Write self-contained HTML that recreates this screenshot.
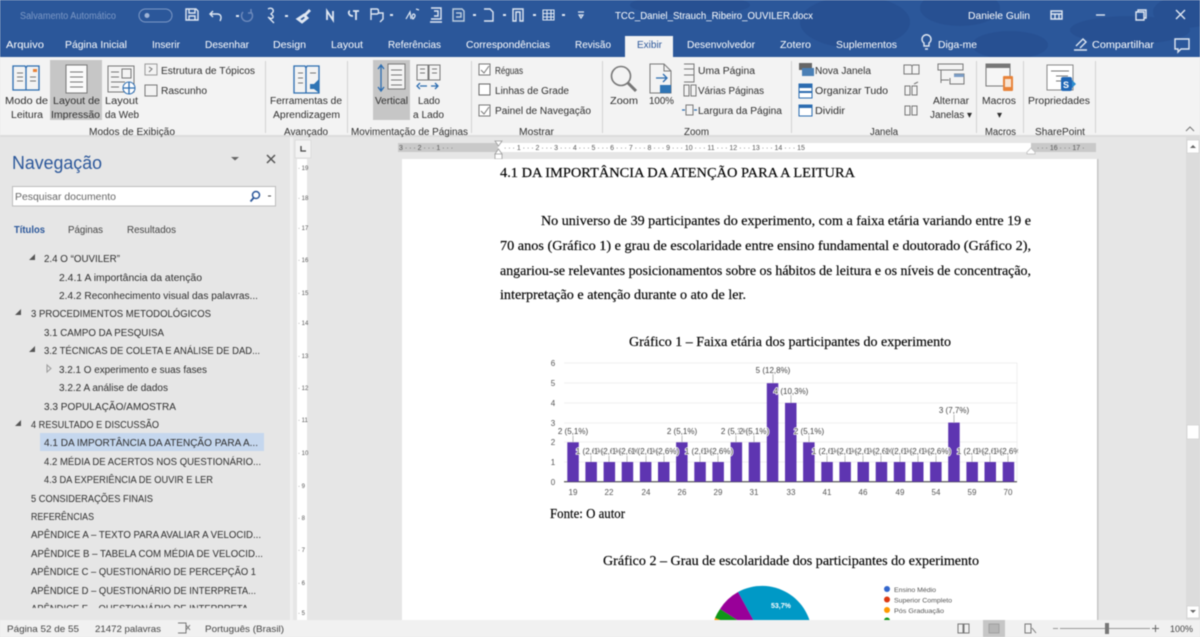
<!DOCTYPE html>
<html lang="pt-BR"><head><meta charset="utf-8"><title>TCC_Daniel_Strauch_Ribeiro_OUVILER.docx</title>
<style>
html,body{margin:0;padding:0;background:#e6e6e6;width:1200px;height:637px;overflow:hidden}
svg{display:block;filter:blur(.6px)}
text{font-family:"Liberation Sans",sans-serif;white-space:pre}
.w text{fill:#fff;font-size:10.5px}
.r text{fill:#2e2e2e;font-size:10px}
.n text{fill:#2e2e2e;font-size:10px}
.d text{font-family:"Liberation Serif",serif;fill:#000;font-size:14px;stroke:#000;stroke-width:.15px}
.c text{fill:#444;font-size:8px;paint-order:stroke;stroke:#fff;stroke-width:1.6px}
.a text{fill:#555;font-size:8px}
.i{fill:none;stroke:#777;stroke-width:1}
.b{fill:none;stroke:#2b6cb0;stroke-width:1.3}
.q{fill:none;stroke:#dfe7f2;stroke-width:1.4}
</style></head><body>
<svg width="1200" height="637" viewBox="0 0 1200 637" xmlns="http://www.w3.org/2000/svg">
<rect width="1200" height="637" fill="#e6e6e6"/>

<!-- title bar -->
<rect width="1200" height="57" fill="#2b579a"/>
<g fill="#275092">
<ellipse cx="855" cy="22" rx="55" ry="26"/><ellipse cx="960" cy="8" rx="40" ry="18"/><ellipse cx="1010" cy="45" rx="38" ry="14"/><ellipse cx="1130" cy="30" rx="60" ry="14"/><ellipse cx="1185" cy="12" rx="32" ry="16"/><ellipse cx="690" cy="5" rx="60" ry="10"/>
</g>
<text x="20" y="19" font-size="10" fill="#7d99c6" textLength="96" lengthAdjust="spacingAndGlyphs">Salvamento Automático</text>
<rect x="139" y="9" width="33" height="13" rx="6.5" fill="none" stroke="#7d99c6"/>
<circle cx="147" cy="15.500" r="2.500" fill="#9fb4d6"/>

<!-- QAT icons -->
<g class="q">
<path d="M186 9h10l2 2v9h-12zM189 9v4h6V9M189 20v-4h6v4"/>
<path d="M213 11l-3 3 3 3M210 14h7c4 0 5 3 3 7"/>
<path stroke="#6d8abc" d="M243 12a5.500 5.500 0 1 0 8 0M251 9v4h-3"/>
<path d="M268 9c3-2 6 0 5 3l-2 2 2 2c1 3-3 3-5 1M269 18l5 5"/>
<path stroke-width="2.800" d="M298 19l6-4 3 3-5 4zM305 15l5-5"/>
<path stroke-width="1.800" d="M327 20v-9l6 9v-9"/>
<path stroke-width="1.800" d="M356 20v-9M353 11h6M350 11c-2 0-2 5 3 5"/>
<path d="M371 20v-11h6c2 0 2 5 0 5h-6M378 13h5v6l-3 3"/>
<path stroke-width="1.200" d="M406 19l4-7 1 7M412 19c3-1 4-4 2-5-2 0-3 4 0 5M416 9l3 1"/>
<path d="M431 8h10v11h-10M434 11h4v5h-4M430 22h12"/>
<path stroke="#bcd" d="M453 9h9l2 2v10h-11zM456 13h5v4h-5"/>
<path d="M484 9h6l3 3v9h-9M484 21h9"/>
<path d="M513 9h10v12h-3v-9h-4v9h-3z"/>
<path stroke-width="1.100" d="M543 10h11v10h-11zM543 13.500h11M543 17h11M547 10v10M551 10v10"/>
<path stroke-width="1.200" d="M578 12h6M579 15h4l-2 3z"/>
</g>
<g fill="#dfe7f2">
<rect x="236" y="15" width="3" height="2"/><rect x="285" y="15" width="3" height="2"/><rect x="390" y="14" width="3" height="2"/><rect x="473" y="14" width="3" height="2"/><rect x="503" y="14" width="3" height="2"/><rect x="533" y="14" width="3" height="2"/><rect x="562" y="14" width="3" height="2"/>
</g>
<g class="w">
<text x="615" y="19" font-size="10" textLength="198" lengthAdjust="spacingAndGlyphs">TCC_Daniel_Strauch_Ribeiro_OUVILER.docx</text>
<text x="968" y="19" textLength="62" lengthAdjust="spacingAndGlyphs">Daniele Gulin</text>
<text x="6" y="48" fill="#dde6f2" textLength="38" lengthAdjust="spacingAndGlyphs">Arquivo</text>
<text x="65" y="48" textLength="62" lengthAdjust="spacingAndGlyphs">Página Inicial</text>
<text x="152" y="48" textLength="28" lengthAdjust="spacingAndGlyphs">Inserir</text>
<text x="205" y="48" textLength="44" lengthAdjust="spacingAndGlyphs">Desenhar</text>
<text x="273" y="48" textLength="33" lengthAdjust="spacingAndGlyphs">Design</text>
<text x="331" y="48" textLength="32" lengthAdjust="spacingAndGlyphs">Layout</text>
<text x="388" y="48" textLength="53" lengthAdjust="spacingAndGlyphs">Referências</text>
<text x="466" y="48" textLength="84" lengthAdjust="spacingAndGlyphs">Correspondências</text>
<text x="575" y="48" textLength="36" lengthAdjust="spacingAndGlyphs">Revisão</text>
<text x="687" y="48" textLength="68" lengthAdjust="spacingAndGlyphs">Desenvolvedor</text>
<text x="780" y="48" textLength="31" lengthAdjust="spacingAndGlyphs">Zotero</text>
<text x="836" y="48" textLength="61" lengthAdjust="spacingAndGlyphs">Suplementos</text>
<text x="938" y="48" textLength="39" lengthAdjust="spacingAndGlyphs">Diga-me</text>
<text x="1092" y="48" textLength="62" lengthAdjust="spacingAndGlyphs">Compartilhar</text>
</g>
<g class="q">
<path d="M1051 11h11v8h-11zM1051 14h11M1055 14v5M1059 14v5"/>
<path d="M1096 15h9"/>
<path d="M1136 12h8v8h-8zM1138 12v-2h8v8h-2"/>
<path d="M1176 10l9 9M1185 10l-9 9"/>
<path d="M924 43a4.500 4.500 0 1 1 5 0v3h-5zM925 49h3"/>
<path d="M1074 50h13M1076 46l7-7 3 3-6 6"/>
<path d="M1175 39h14v10h-8l-3 3v-3h-3z"/>
</g>
<!-- active tab -->
<path d="M625 57V36h48v21z" fill="#f3f3f3"/>
<text x="637" y="48" font-size="10.500" fill="#2b579a" textLength="25" lengthAdjust="spacingAndGlyphs">Exibir</text>

<!-- ribbon -->
<rect y="57" width="1200" height="78" fill="#f3f3f3"/>
<rect y="135" width="1200" height="2" fill="#dcdcdc"/>
<rect x="50" y="60" width="52" height="60" fill="#c6c6c6"/>
<rect x="373" y="60" width="37" height="60" fill="#c6c6c6"/>
<g fill="#d2d2d2">
<rect x="265" y="61" width="1" height="72"/><rect x="347" y="61" width="1" height="72"/><rect x="471" y="61" width="1" height="72"/><rect x="602" y="61" width="1" height="72"/><rect x="791" y="61" width="1" height="72"/><rect x="976" y="61" width="1" height="72"/><rect x="1023" y="61" width="1" height="72"/><rect x="1095" y="61" width="1" height="72"/>
</g>
<!-- ribbon icons -->
<path class="b" stroke-width="1.600" d="M13 66h12l1 2 1-2h12v24H13zM26 68v22"/>
<path class="i" d="M17 73h6M17 77h6M17 81h6M30 77h6M30 81h6"/>
<rect x="33" y="69" width="4" height="3" fill="#e8833a"/>
<rect x="66" y="65" width="21" height="28" fill="#fafafa" stroke="#777"/>
<path class="i" d="M70 72h13M70 77h13M70 82h13M70 87h13"/>
<path class="i" stroke="#999" d="M108 66h26v26h-26zM122 69h9v9h-9zM111 72h8M111 77h8M111 82h14M111 87h8"/>
<circle cx="129" cy="88" r="6" fill="#fff" stroke="#2b6cb0"/><path class="b" d="M123 88h12M129 82v12"/>
<rect x="145" y="64" width="12" height="11" fill="none" stroke="#999"/><path class="i" stroke="#999" d="M149 67l3 2-3 3"/>
<rect x="145" y="85" width="12" height="11" fill="none" stroke="#777"/>
<path class="b" stroke-width="1.600" d="M294 66h11l1 2 1-2h12v27h-25zM306 68v25"/>
<path class="i" d="M298 73h5M298 78h5M298 83h5M310 73h6"/>
<path d="M310 84h4l5-5v14l-5-4h-4z" fill="#2f75b5"/>
<rect x="388" y="64" width="17" height="25" fill="#f3f3f3" stroke="#777"/>
<path class="i" d="M391 70h11M391 75h11M391 80h11M391 85h11"/>
<path class="b" stroke="#2f75b5" stroke-width="1.800" d="M381 65v26M378 69l3-4 3 4M378 87l3 4 3-4"/>
<path class="i" d="M417 65h11v15h-11zM429 65h11v15h-11zM420 69h5M420 73h5M432 69h5M432 73h5"/>
<path class="b" stroke-width="1.700" d="M420 86h7M420 83l-3 3 3 3M431 86h7M435 83l3 3-3 3"/>
<rect x="479" y="64" width="11" height="11" fill="#fff" stroke="#777"/><path class="i" d="M481 70l3 3 5-7"/>
<rect x="479" y="84" width="11" height="11" fill="#fff" stroke="#666"/>
<rect x="479" y="105" width="11" height="11" fill="#fff" stroke="#777"/><path class="i" d="M481 111l3 3 5-7"/>
<circle cx="621" cy="76" r="9.500" fill="none" stroke="#777" stroke-width="1.600"/><path fill="none" stroke="#777" stroke-width="3" d="M628 83l8 8"/>
<path class="i" stroke="#aaa" d="M650 64h14l7 7v22h-21zM664 64v7h7"/>
<path class="b" stroke-width="1.700" d="M655 87h0M656 78h11M663 74l4 4-4 4"/>
<rect x="660" y="85" width="11" height="8" fill="#2f75b5"/>
<path class="i" d="M684 63h10v18h-10M684 68h10M684 74h10" transform="translate(0 1)"/>
<path class="i" stroke="#999" d="M684 85h5v11h-5zM691 85h5v11h-5z"/>
<path class="i" stroke="#999" d="M686 105h7v10h-7z"/><path class="b" d="M682 110h3M694 110h3"/>
<rect x="799" y="63" width="13" height="7" fill="#666"/><rect x="802" y="68" width="12" height="8" fill="#4a7fb5"/>
<rect x="799" y="84" width="13" height="14" fill="#fff" stroke="#2b6cb0"/><rect x="799" y="84" width="13" height="4" fill="#2b6cb0"/><rect x="799" y="91" width="13" height="2" fill="#2b6cb0"/>
<rect x="799" y="105" width="13" height="11" fill="#fff" stroke="#2b6cb0"/><rect x="799" y="105" width="13" height="3" fill="#2b6cb0"/>
<path class="i" d="M904 65h7l1 1 1-1h6v9h-15zM912 66v8"/>
<path class="i" stroke="#bbb" d="M905 86h5v9h-5zM912 86h5v9h-5zM914 84l4-2"/>
<path class="i" stroke="#bbb" d="M905 106h5v9h-5zM912 106h5v9h-5z"/>
<path class="i" d="M938 64h25v6h-25zM938 70h3v13M954 74h10v10h-14v-6M941 80h8"/>
<rect x="954" y="74" width="10" height="3" fill="#7a9cc6"/>
<rect x="986" y="64" width="24" height="22" fill="#f6f6f6" stroke="#777"/><rect x="986" y="64" width="24" height="4" fill="#777"/>
<rect x="1003" y="76" width="10" height="15" rx="1" fill="#e8833a"/><rect x="1005" y="79" width="6" height="8" fill="#f8e4d2"/>
<rect x="1047" y="65" width="26" height="25" fill="#fff" stroke="#888"/><path class="i" stroke="#999" d="M1051 71h18M1056 76h12M1056 81h8"/>
<rect x="1061" y="77" width="11" height="14" rx="2" fill="#1f66b5"/><path d="M1072 80l4 4-4 4z" fill="#2d8ed0"/><text x="1063" y="88" font-size="9" font-weight="bold" fill="#fff">S</text>
<path class="i" stroke-width="1.500" d="M1186 131l4-4 4 4"/>

<g class="r">
<text x="5" y="104" textLength="43" lengthAdjust="spacingAndGlyphs">Modo de</text>
<text x="11" y="118" textLength="32" lengthAdjust="spacingAndGlyphs">Leitura</text>
<text x="53" y="104" textLength="47" lengthAdjust="spacingAndGlyphs">Layout de</text>
<text x="51" y="118" textLength="49" lengthAdjust="spacingAndGlyphs">Impressão</text>
<text x="105" y="104" textLength="33" lengthAdjust="spacingAndGlyphs">Layout</text>
<text x="105" y="118" textLength="34" lengthAdjust="spacingAndGlyphs">da Web</text>
<text x="161" y="74" textLength="94" lengthAdjust="spacingAndGlyphs">Estrutura de Tópicos</text>
<text x="161" y="94" textLength="46" lengthAdjust="spacingAndGlyphs">Rascunho</text>
<text x="89" y="135" textLength="86" lengthAdjust="spacingAndGlyphs">Modos de Exibição</text>
<text x="270" y="104" textLength="72" lengthAdjust="spacingAndGlyphs">Ferramentas de</text>
<text x="273" y="118" textLength="67" lengthAdjust="spacingAndGlyphs">Aprendizagem</text>
<text x="284" y="135" textLength="44" lengthAdjust="spacingAndGlyphs">Avançado</text>
<text x="375" y="104" textLength="33" lengthAdjust="spacingAndGlyphs">Vertical</text>
<text x="418" y="104" textLength="22" lengthAdjust="spacingAndGlyphs">Lado</text>
<text x="413" y="118" textLength="31" lengthAdjust="spacingAndGlyphs">a Lado</text>
<text x="351" y="135" textLength="117" lengthAdjust="spacingAndGlyphs">Movimentação de Páginas</text>
<text x="495" y="74" textLength="28" lengthAdjust="spacingAndGlyphs">Réguas</text>
<text x="495" y="94" textLength="74" lengthAdjust="spacingAndGlyphs">Linhas de Grade</text>
<text x="495" y="114" textLength="96" lengthAdjust="spacingAndGlyphs">Painel de Navegação</text>
<text x="519" y="135" textLength="35" lengthAdjust="spacingAndGlyphs">Mostrar</text>
<text x="610" y="104" textLength="28" lengthAdjust="spacingAndGlyphs">Zoom</text>
<text x="649" y="104" textLength="25" lengthAdjust="spacingAndGlyphs">100%</text>
<text x="698" y="74" textLength="57" lengthAdjust="spacingAndGlyphs">Uma Página</text>
<text x="698" y="94" textLength="66" lengthAdjust="spacingAndGlyphs">Várias Páginas</text>
<text x="698" y="114" textLength="84" lengthAdjust="spacingAndGlyphs">Largura da Página</text>
<text x="684" y="135" textLength="25" lengthAdjust="spacingAndGlyphs">Zoom</text>
<text x="815" y="74" textLength="56" lengthAdjust="spacingAndGlyphs">Nova Janela</text>
<text x="815" y="94" textLength="73" lengthAdjust="spacingAndGlyphs">Organizar Tudo</text>
<text x="815" y="114" textLength="30" lengthAdjust="spacingAndGlyphs">Dividir</text>
<text x="870" y="135" textLength="28" lengthAdjust="spacingAndGlyphs">Janela</text>
<text x="933" y="104" textLength="36" lengthAdjust="spacingAndGlyphs">Alternar</text>
<text x="930" y="118" textLength="42" lengthAdjust="spacingAndGlyphs">Janelas ▾</text>
<text x="982" y="104" textLength="34" lengthAdjust="spacingAndGlyphs">Macros</text>
<text x="997" y="118" font-size="8">▾</text>
<text x="985" y="135" textLength="31" lengthAdjust="spacingAndGlyphs">Macros</text>
<text x="1028" y="104" textLength="62" lengthAdjust="spacingAndGlyphs">Propriedades</text>
<text x="1035" y="135" textLength="50" lengthAdjust="spacingAndGlyphs">SharePoint</text>
</g>

<!-- document area -->
<rect x="290" y="137" width="910" height="483" fill="#e6e6e6"/>
<rect x="291" y="137" width="2" height="483" fill="#f0f0f0"/>
<rect x="295" y="140" width="16" height="18" fill="#f3f3f3" stroke="#dcdcdc"/>
<path d="M301 146v5h5" fill="none" stroke="#444" stroke-width="1.300"/>
<rect x="297" y="159" width="10" height="461" fill="#fff"/>
<rect x="398" y="143" width="100" height="9" fill="#c9c9c9"/>
<rect x="498" y="143" width="533" height="9" fill="#fff"/>
<rect x="1031" y="143" width="65" height="9" fill="#c9c9c9"/>
<g fill="#555" font-size="7">
<text x="399" y="150">3 · · · 2 · · · 1 · · ·</text>
<text x="504" y="150" xml:space="preserve">· · · 1 · · · 2 · · · 3 · · · 4 · · · 5 · · · 6 · · · 7 · · · 8 · · · 9 · · · 10 · · · 11 · · · 12 · · · 13 · · · 14 · · · 15</text>
<text x="1037" y="150">· · · 16 · · · 17 ·</text>
<text x="298" y="170" font-size="6">· 19</text><text x="298" y="200" font-size="6">· 18</text><text x="298" y="230" font-size="6">· 17</text><text x="298" y="262" font-size="6">· 16</text><text x="298" y="295" font-size="6">· 15</text><text x="298" y="325" font-size="6">· 14</text><text x="298" y="358" font-size="6">· 13</text><text x="298" y="390" font-size="6">· 12</text><text x="298" y="422" font-size="6">· 11</text><text x="298" y="455" font-size="6">· 10</text><text x="298" y="488" font-size="6">· 9</text><text x="298" y="520" font-size="6">· 8</text><text x="298" y="552" font-size="6">· 7</text><text x="298" y="585" font-size="6">· 6</text><text x="298" y="615" font-size="6">· 5</text>
</g>
<path d="M495 141h7l-3.500 5zM495 154h7l-3.500-5z M495 154h7v5h-7z" fill="#fff" stroke="#999" stroke-width=".8"/>
<path d="M1027 152l4-4 4 4v2h-8z" fill="#fff" stroke="#bbb" stroke-width=".8"/>
<!-- page -->
<rect x="402" y="159" width="695" height="461" fill="#fff"/>
<rect x="1097" y="159" width="1.500" height="461" fill="#c6c6c6"/>

<g class="d">
<text x="500" y="177" textLength="355" lengthAdjust="spacingAndGlyphs">4.1 DA IMPORTÂNCIA DA ATENÇÃO PARA A LEITURA</text>
<text x="541" y="225" textLength="490" lengthAdjust="spacingAndGlyphs">No universo de 39 participantes do experimento, com a faixa etária variando entre 19 e</text>
<text x="500" y="250" textLength="531" lengthAdjust="spacingAndGlyphs">70 anos (Gráfico 1) e grau de escolaridade entre ensino fundamental e doutorado (Gráfico 2),</text>
<text x="500" y="275" textLength="531" lengthAdjust="spacingAndGlyphs">angariou-se relevantes posicionamentos sobre os hábitos de leitura e os níveis de concentração,</text>
<text x="500" y="299" textLength="246" lengthAdjust="spacingAndGlyphs">interpretação e atenção durante o ato de ler.</text>
<text x="629" y="346" textLength="322" lengthAdjust="spacingAndGlyphs">Gráfico 1 – Faixa etária dos participantes do experimento</text>
<text x="550" y="518" textLength="75" lengthAdjust="spacingAndGlyphs">Fonte: O autor</text>
<text x="603" y="565" textLength="376" lengthAdjust="spacingAndGlyphs">Gráfico 2 – Grau de escolaridade dos participantes do experimento</text>
</g>

<!-- chart 1 -->
<g stroke="#ececec" stroke-width=".8">
<path d="M564 363h453M564 383h453M564 403h453M564 423h453M564 442h453M564 462h453M1017 363v119"/>
</g>
<path d="M564 481.700h453" stroke="#333" stroke-width="1"/>
<g fill="#5e35b1">
<rect x="567.300" y="442.300" width="11.500" height="39.400"/><rect x="585.400" y="462" width="11.500" height="19.700"/><rect x="603.600" y="462" width="11.500" height="19.700"/><rect x="621.700" y="462" width="11.500" height="19.700"/><rect x="639.900" y="462" width="11.500" height="19.700"/><rect x="658" y="462" width="11.500" height="19.700"/><rect x="676.100" y="442.300" width="11.500" height="39.400"/><rect x="694.300" y="462" width="11.500" height="19.700"/><rect x="712.400" y="462" width="11.500" height="19.700"/><rect x="730.600" y="442.300" width="11.500" height="39.400"/><rect x="748.700" y="442.300" width="11.500" height="39.400"/><rect x="766.800" y="383.200" width="11.500" height="98.500"/><rect x="785" y="402.900" width="11.500" height="78.800"/><rect x="803.100" y="442.300" width="11.500" height="39.400"/><rect x="821.300" y="462" width="11.500" height="19.700"/><rect x="839.400" y="462" width="11.500" height="19.700"/><rect x="857.500" y="462" width="11.500" height="19.700"/><rect x="875.700" y="462" width="11.500" height="19.700"/><rect x="893.800" y="462" width="11.500" height="19.700"/><rect x="912" y="462" width="11.500" height="19.700"/><rect x="930.100" y="462" width="11.500" height="19.700"/><rect x="948.200" y="422.600" width="11.500" height="59.100"/><rect x="966.400" y="462" width="11.500" height="19.700"/><rect x="984.500" y="462" width="11.500" height="19.700"/><rect x="1002.700" y="462" width="11.500" height="19.700"/>
</g>
<g stroke="#aaa" stroke-width=".8">
<path d="M573 434v8M591 455v7M609 455v7M627 455v7M646 455v7M664 455v7M682 434v8M700 455v7M718 455v7M736 434v8M754 434v8M773 374v9M791 395v8M809 434v8M827 455v7M845 455v7M863 455v7M881 455v7M900 455v7M918 455v7M936 455v7M954 414v9M972 455v7M990 455v7M1008 455v7"/>
</g>
<clipPath id="cc"><rect x="540" y="360" width="478" height="130"/></clipPath>
<g class="c" text-anchor="middle" clip-path="url(#cc)">
<text x="591" y="454">1 (2,6%)</text><text x="609" y="454">1 (2,6%)</text><text x="627" y="454">1 (2,6%)</text><text x="646" y="454">1 (2,6%)</text><text x="664" y="454">1 (2,6%)</text>
<text x="700" y="454">1 (2,6%)</text><text x="718" y="454">1 (2,6%)</text>
<text x="827" y="454">1 (2,6%)</text><text x="845" y="454">1 (2,6%)</text><text x="863" y="454">1 (2,6%)</text><text x="881" y="454">1 (2,6%)</text><text x="900" y="454">1 (2,6%)</text><text x="918" y="454">1 (2,6%)</text><text x="936" y="454">1 (2,6%)</text>
<text x="972" y="454">1 (2,6%)</text><text x="990" y="454">1 (2,6%)</text><text x="1008" y="454">1 (2,6%)</text>
<text x="573" y="434">2 (5,1%)</text><text x="682" y="434">2 (5,1%)</text><text x="736" y="434">2 (5,1%)</text><text x="754" y="434">2 (5,1%)</text><text x="809" y="434">2 (5,1%)</text>
<text x="773" y="373">5 (12,8%)</text><text x="791" y="394">4 (10,3%)</text><text x="954" y="413">3 (7,7%)</text>
</g>
<g class="a" text-anchor="middle">
<text x="553" y="366">6</text><text x="553" y="386">5</text><text x="553" y="406">4</text><text x="553" y="426">3</text><text x="553" y="445">2</text><text x="553" y="465">1</text><text x="553" y="485">0</text>
<text x="573" y="495">19</text><text x="609" y="495">22</text><text x="646" y="495">24</text><text x="682" y="495">26</text><text x="718" y="495">29</text><text x="754" y="495">31</text><text x="791" y="495">33</text><text x="827" y="495">41</text><text x="863" y="495">46</text><text x="900" y="495">49</text><text x="936" y="495">54</text><text x="972" y="495">59</text><text x="1008" y="495">70</text>
</g>

<!-- chart 2 -->
<path d="M762 636L738 592A50 50 0 0 1 812 636Z" fill="#0099c6"/>
<path d="M762 636L738 592A50 50 0 0 0 720 609Z" fill="#990099"/>
<path d="M762 636L720 609A50 50 0 0 0 715 618Z" fill="#109618"/>
<path d="M762 636L715 618A50 50 0 0 0 712 636Z" fill="#ff9900"/>
<text x="771" y="608" font-size="7" fill="#fff" font-weight="bold">53,7%</text>
<circle cx="887" cy="589" r="3" fill="#3366cc"/><circle cx="887" cy="599.500" r="3" fill="#dc3912"/><circle cx="887" cy="610" r="3" fill="#ff9900"/><circle cx="887" cy="620.500" r="3" fill="#109618"/>
<g fill="#555" font-size="6.500">
<text x="894" y="592" textLength="42" lengthAdjust="spacingAndGlyphs">Ensino Médio</text>
<text x="894" y="602.500" textLength="58" lengthAdjust="spacingAndGlyphs">Superior Completo</text>
<text x="894" y="613" textLength="50" lengthAdjust="spacingAndGlyphs">Pós Graduação</text>
</g>

<!-- scrollbar -->
<rect x="1186" y="137" width="14" height="483" fill="#dcdcdc"/>
<rect x="1187" y="140" width="12" height="13" fill="#fff" stroke="#ccc" stroke-width=".6"/>
<path d="M1190 148l3-3 3 3z" fill="#666"/>
<rect x="1187" y="425" width="12" height="14" fill="#fff" stroke="#ccc" stroke-width=".6"/>
<rect x="1187" y="606" width="12" height="12" fill="#fff" stroke="#ccc" stroke-width=".6"/>
<path d="M1190 610l3 3 3-3z" fill="#666"/>

<!-- nav pane -->
<rect width="290" height="483" y="137" fill="#e6e6e6"/>
<rect x="290" y="137" width="1" height="483" fill="#f2f2f2"/>
<text x="12" y="169" font-size="18" fill="#2b579a" textLength="90" lengthAdjust="spacingAndGlyphs">Navegação</text>
<path d="M231 157h8l-4 3.500z" fill="#666"/>
<path d="M267 155l8 8M275 155l-8 8" stroke="#555" stroke-width="1.500"/>
<rect x="12.500" y="186.500" width="263" height="19.500" fill="#fff" stroke="#bdbdbd"/>
<text x="15" y="200" font-size="10" fill="#666" textLength="101" lengthAdjust="spacingAndGlyphs">Pesquisar documento</text>
<circle cx="256" cy="195" r="3.500" fill="none" stroke="#2b579a" stroke-width="1.500"/><path d="M253.500 198l-3 3.500" stroke="#2b579a" stroke-width="1.800"/>
<path d="M268 196h3" stroke="#444"/>
<text x="14" y="233" font-size="10" font-weight="bold" fill="#2b579a" textLength="31" lengthAdjust="spacingAndGlyphs">Títulos</text>
<text x="68" y="233" font-size="10" fill="#444" textLength="35" lengthAdjust="spacingAndGlyphs">Páginas</text>
<text x="127" y="233" font-size="10" fill="#444" textLength="49" lengthAdjust="spacingAndGlyphs">Resultados</text>
<rect x="40" y="433" width="224" height="18" fill="#c5d7ee"/>
<g fill="#555">
<path d="M35 254v6h-6zM21 309v6h-6zM35 346v6h-6zM21 420v6h-6z"/>
</g>
<path d="M47 365v7l4-3.500z" fill="none" stroke="#999"/>
<clipPath id="nc"><rect x="0" y="240" width="290" height="368"/></clipPath>
<g class="n" clip-path="url(#nc)">
<text x="44" y="262" textLength="76" lengthAdjust="spacingAndGlyphs">2.4 O “OUVILER”</text>
<text x="59" y="281" textLength="143" lengthAdjust="spacingAndGlyphs">2.4.1 A importância da atenção</text>
<text x="59" y="299" textLength="199" lengthAdjust="spacingAndGlyphs">2.4.2 Reconhecimento visual das palavras...</text>
<text x="31" y="317" textLength="180" lengthAdjust="spacingAndGlyphs">3 PROCEDIMENTOS METODOLÓGICOS</text>
<text x="44" y="336" textLength="120" lengthAdjust="spacingAndGlyphs">3.1 CAMPO DA PESQUISA</text>
<text x="44" y="354" textLength="216" lengthAdjust="spacingAndGlyphs">3.2 TÉCNICAS DE COLETA E ANÁLISE DE DAD...</text>
<text x="59" y="373" textLength="148" lengthAdjust="spacingAndGlyphs">3.2.1 O experimento e suas fases</text>
<text x="59" y="391" textLength="109" lengthAdjust="spacingAndGlyphs">3.2.2 A análise de dados</text>
<text x="44" y="410" textLength="132" lengthAdjust="spacingAndGlyphs">3.3 POPULAÇÃO/AMOSTRA</text>
<text x="31" y="428" textLength="128" lengthAdjust="spacingAndGlyphs">4 RESULTADO E DISCUSSÃO</text>
<text x="44" y="446" textLength="214" lengthAdjust="spacingAndGlyphs">4.1 DA IMPORTÂNCIA DA ATENÇÃO PARA A...</text>
<text x="44" y="465" textLength="217" lengthAdjust="spacingAndGlyphs">4.2 MÉDIA DE ACERTOS NOS QUESTIONÁRIO...</text>
<text x="44" y="483" textLength="169" lengthAdjust="spacingAndGlyphs">4.3 DA EXPERIÊNCIA DE OUVIR E LER</text>
<text x="31" y="502" textLength="122" lengthAdjust="spacingAndGlyphs">5 CONSIDERAÇÕES FINAIS</text>
<text x="31" y="520" textLength="63" lengthAdjust="spacingAndGlyphs">REFERÊNCIAS</text>
<text x="31" y="538" textLength="230" lengthAdjust="spacingAndGlyphs">APÊNDICE A – TEXTO PARA AVALIAR A VELOCID...</text>
<text x="31" y="557" textLength="232" lengthAdjust="spacingAndGlyphs">APÊNDICE B – TABELA COM MÉDIA DE VELOCID...</text>
<text x="31" y="575" textLength="225" lengthAdjust="spacingAndGlyphs">APÊNDICE C – QUESTIONÁRIO DE PERCEPÇÃO 1</text>
<text x="31" y="594" textLength="225" lengthAdjust="spacingAndGlyphs">APÊNDICE D – QUESTIONÁRIO DE INTERPRETA...</text>
<text x="31" y="612" textLength="225" lengthAdjust="spacingAndGlyphs">APÊNDICE E – QUESTIONÁRIO DE INTERPRETA...</text>
</g>

<!-- status bar -->
<rect y="620" width="1200" height="17" fill="#f1f1f1"/>
<rect x="983" y="620" width="22" height="17" fill="#c6c6c6"/>
<g fill="#444" font-size="9.500">
<text x="7" y="632" textLength="72" lengthAdjust="spacingAndGlyphs">Página 52 de 55</text>
<text x="95" y="632" textLength="66" lengthAdjust="spacingAndGlyphs">21472 palavras</text>
<text x="205" y="632" textLength="79" lengthAdjust="spacingAndGlyphs">Português (Brasil)</text>
<text x="1170" y="632" textLength="23" lengthAdjust="spacingAndGlyphs">100%</text>
</g>
<path class="i" stroke="#999" d="M178 623h8v10h-8M186 625l4 5M190 625l-4 5"/>
<path class="i" stroke="#999" d="M958 624h5v9h-5zM964 624h5v9h-5z"/>
<rect x="989" y="624" width="10" height="9" fill="#b5b5b5" stroke="#999" stroke-width=".8"/>
<path class="i" stroke="#999" d="M1025 624h6v9h-6zM1032 628l4 5"/>
<path d="M1053 628.500h5M1060 628.500h90" stroke="#999" fill="none"/>
<rect x="1105" y="623" width="4" height="11" fill="#777"/>
<path d="M1152 628.500h7M1155.500 625v7" stroke="#666" fill="none"/>
</svg>
</body></html>
